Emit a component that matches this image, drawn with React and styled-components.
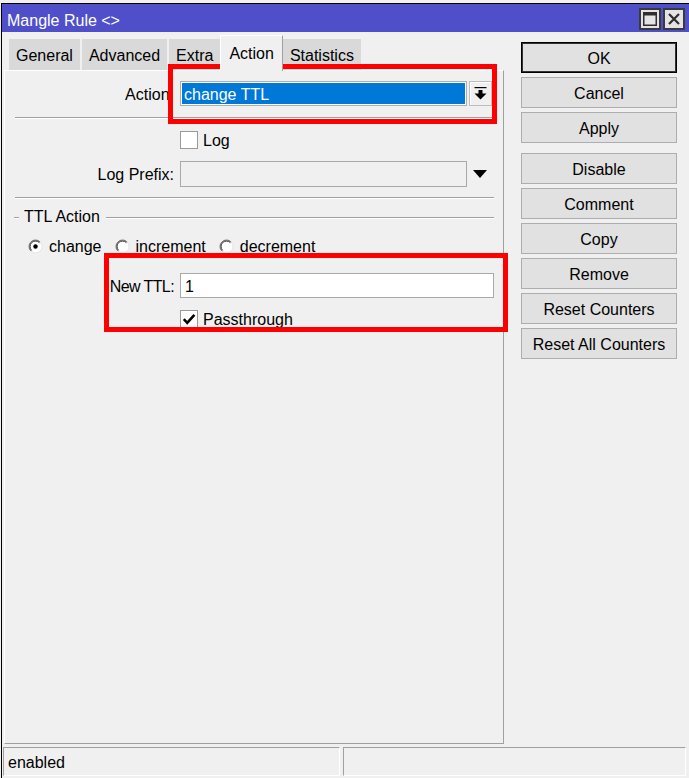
import React from 'react';
import styled, { createGlobalStyle } from 'styled-components';

const GlobalStyle = createGlobalStyle`
  html, body {
    margin: 0;
    padding: 0;
    background: #f0f0f0;
  }
  body {
    font-family: "Liberation Sans", Arial, sans-serif;
    font-size: 16px;
    color: #000;
  }
  * { box-sizing: border-box; }
`;

const Screen = styled.div`
  position: relative;
  width: 689px;
  height: 778px;
  overflow: hidden;
  background: #f0f0f0;
  padding: 3px 0 0 1px;
`;

const Window = styled.div`
  display: flex;
  flex-direction: column;
  height: 775px;
  border-top: 1px solid #000;
  border-left: 1px solid #000;
  background: #f0f0f0;
`;

const TitleBar = styled.div`
  display: flex;
  align-items: center;
  height: 28px;
  padding: 0 4px 0 5px;
  background: #4f50c9;
  color: #fff;
`;

const TitleText = styled.div`
  flex: 1;
  padding-top: 5px;
  white-space: nowrap;
`;

const TitleButton = styled.div`
  width: 22px;
  height: 22px;
  margin-left: 2px;
  margin-top: 2px;
  border: 2px solid #3a3a3a;
  background: #e4e4e4;
  display: flex;
  align-items: center;
  justify-content: center;
`;

const Body = styled.div`
  flex: 1;
  display: flex;
  min-height: 0;
  padding: 3px 0 0 2px;
`;

const LeftCol = styled.div`
  width: 500px;
  display: flex;
  flex-direction: column;
`;

const Tabs = styled.div`
  display: flex;
  align-items: flex-end;
  height: 35px;
  padding-left: 5px;
`;

const Tab = styled.div`
  position: relative;
  height: ${p => (p.$active ? 36 : 31)}px;
  margin-bottom: ${p => (p.$active ? -1 : 0)}px;
  margin-right: ${p => (p.$active ? 0 : 2)}px;
  margin-left: ${p => (p.$active ? -2 : 0)}px;
  z-index: ${p => (p.$active ? 1 : 0)};
  padding: ${p => (p.$active ? '0 8px' : '3px 7px 0')};
  display: flex;
  align-items: center;
  background: ${p => (p.$active ? '#f0f0f0' : '#d9d9d9')};
  border-top: ${p => (p.$active ? '1px solid #fff' : 'none')};
  border-left: ${p => (p.$active ? '1px solid #fff' : 'none')};
  border-right: ${p => (p.$active ? '1px solid #a0a0a0' : 'none')};
  white-space: nowrap;
`;

const Panel = styled.div`
  flex: 1;
  display: flex;
  flex-direction: column;
  border-top: 1px solid #fff;
  border-left: 1px solid #fff;
  border-right: 1px solid #a0a0a0;
  border-bottom: 1px solid #a0a0a0;
  padding: 0 9px 0 0;
`;

const Row = styled.div`
  display: flex;
  align-items: center;
  height: ${p => p.$h}px;
  margin-top: ${p => p.$mt}px;
  padding-left: ${p => p.$indent || 0}px;
`;

const Text = styled.span`
  padding-top: 2px;
  white-space: nowrap;
`;

const Label = styled.div`
  width: 169px;
  margin-right: 6px;
  padding-top: 2px;
  text-align: right;
  white-space: nowrap;
  letter-spacing: ${p => (p.$tight ? '-0.6px' : 'normal')};
`;

const Combo = styled.div`
  width: 287px;
  height: 25px;
  border: 1px solid #adadad;
  background: #fff;
  padding: 1px;
`;

const ComboValue = styled.div`
  height: 100%;
  background: #0078d7;
  color: #fff;
  padding: 2px 0 0 2px;
  display: flex;
  align-items: center;
`;

const DropButton = styled.div`
  width: 23px;
  height: 25px;
  margin-left: 2px;
  border: 1px solid #bcbcbc;
  box-shadow: inset 1px 1px 0 #fff;
  display: flex;
  align-items: center;
  justify-content: center;
`;

const TextInput = styled.div`
  width: ${p => (p.$w ? `${p.$w}px` : 'auto')};
  flex: ${p => (p.$w ? '0 0 auto' : 1)};
  height: ${p => p.$h}px;
  border: 1px solid #a9a9a9;
  background: ${p => (p.$white ? '#fff' : 'transparent')};
  padding: 2px 0 0 4px;
  display: flex;
  align-items: center;
`;

const Separator = styled.div`
  margin: ${p => p.$mt}px 0 0 10px;
  border-top: 1px solid #a0a0a0;
  border-bottom: 1px solid #fff;
`;

const GroupHeader = styled.div`
  display: flex;
  align-items: center;
  height: 18px;
  margin-top: 8px;
  padding-left: 9px;
`;

const GroupLine = styled.div`
  width: ${p => (p.$w ? `${p.$w}px` : 'auto')};
  flex: ${p => (p.$w ? '0 0 auto' : 1)};
  margin-top: 4px;
  border-top: 1px solid #a0a0a0;
  border-bottom: 1px solid #fff;
`;

const GroupTitle = styled.div`
  margin: 0 6px 0 5px;
  padding-top: 2px;
  white-space: nowrap;
`;

const RadioItem = styled.div`
  display: flex;
  align-items: center;
  gap: 6px;
  margin-right: 13px;
`;

const CheckBox = styled.div`
  width: 18px;
  height: 18px;
  border: 1px solid #9a9a9a;
  background: #fff;
  margin-right: 5px;
  display: flex;
  align-items: center;
  justify-content: center;
`;

const RightCol = styled.div`
  width: 156px;
  margin-left: 17px;
  padding-top: 7px;
  display: flex;
  flex-direction: column;
  gap: 4px;
`;

const Button = styled.div`
  height: 31px;
  margin-top: ${p => (p.$spaced ? 6 : 0)}px;
  padding-top: 2px;
  border: 1px solid ${p => (p.$default ? '#000' : '#adadad')};
  box-shadow: ${p => (p.$default ? 'inset 0 0 0 1px #333' : 'none')};
  background: #e1e1e1;
  display: flex;
  align-items: center;
  justify-content: center;
  white-space: nowrap;
`;

const StatusBar = styled.div`
  display: flex;
  gap: 3px;
  height: 31px;
  margin-top: 3px;
  padding: 0 3px 2px 1px;
`;

const StatusCell = styled.div`
  width: ${p => (p.$w ? `${p.$w}px` : 'auto')};
  flex: ${p => (p.$w ? '0 0 auto' : 1)};
  border-top: 1px solid #a0a0a0;
  border-left: 1px solid #a0a0a0;
  border-right: 1px solid #fff;
  border-bottom: 1px solid #fff;
  padding: 2px 0 0 4px;
  display: flex;
  align-items: center;
`;

const Highlight = styled.div`
  position: absolute;
  left: ${p => p.$x}px;
  top: ${p => p.$y}px;
  width: ${p => p.$w}px;
  height: ${p => p.$h}px;
  border: 5px solid #ff0000;
  pointer-events: none;
`;

const Radio = ({ checked }) => (
  <svg width="15" height="15" viewBox="0 0 15 15">
    <circle cx="7.5" cy="7.5" r="6.5" fill="#fff" stroke="#e6e6e6" strokeWidth="1" />
    <path d="M2.9 12.1 A6.5 6.5 0 0 1 12.1 2.9" fill="none" stroke="#7a7a7a" strokeWidth="1" />
    <path d="M3.6 11.4 A5.5 5.5 0 0 1 11.4 3.6" fill="none" stroke="#1e1e1e" strokeWidth="1" />
    {checked && <circle cx="7.5" cy="7.5" r="2.2" fill="#000" />}
  </svg>
);

const CheckMark = () => (
  <svg width="14" height="14" viewBox="0 0 14 14">
    <path d="M1.8 7.2 L5.2 10.8 L12.4 2.8" fill="none" stroke="#000" strokeWidth="2.6" />
  </svg>
);

const DropArrow = () => (
  <svg width="13" height="13" viewBox="0 0 13 13">
    <rect x="0.5" y="0" width="12" height="1.2" fill="#000" />
    <rect x="4.5" y="3" width="4" height="4" fill="#000" />
    <polygon points="0.5,6.5 12.5,6.5 6.5,12.5" fill="#000" />
  </svg>
);

const Triangle = () => (
  <svg width="14" height="8" viewBox="0 0 14 8" style={{ marginLeft: 6 }}>
    <polygon points="0,0 14,0 7,8" fill="#000" />
  </svg>
);

const MaxIcon = () => (
  <svg width="14" height="14" viewBox="0 0 14 14">
    <rect x="0.75" y="0.75" width="12.5" height="12.5" fill="none" stroke="#2e2e2e" strokeWidth="1.5" />
    <rect x="0" y="0" width="14" height="3.5" fill="#2e2e2e" />
  </svg>
);

const CloseIcon = () => (
  <svg width="12" height="12" viewBox="0 0 12 12">
    <path d="M1 1 L11 11 M11 1 L1 11" stroke="#2e2e2e" strokeWidth="2.2" />
  </svg>
);

const tabs = ['General', 'Advanced', 'Extra', 'Action', 'Statistics'];

const buttons = [
  { label: 'OK', def: true },
  { label: 'Cancel' },
  { label: 'Apply' },
  { label: 'Disable', spaced: true },
  { label: 'Comment' },
  { label: 'Copy' },
  { label: 'Remove' },
  { label: 'Reset Counters' },
  { label: 'Reset All Counters' },
];

const radios = [
  { label: 'change', checked: true },
  { label: 'increment' },
  { label: 'decrement' },
];

export default function App() {
  return (
    <Screen>
      <GlobalStyle />
      <Window>
        <TitleBar>
          <TitleText>Mangle Rule &lt;&gt;</TitleText>
          <TitleButton><MaxIcon /></TitleButton>
          <TitleButton><CloseIcon /></TitleButton>
        </TitleBar>

        <Body>
          <LeftCol>
            <Tabs>
              {tabs.map(t => (
                <Tab key={t} $active={t === 'Action'}>{t}</Tab>
              ))}
            </Tabs>
            <Panel>
              <Row $h={25} $mt={10}>
                <Label>Action:</Label>
                <Combo>
                  <ComboValue>change TTL</ComboValue>
                </Combo>
                <DropButton><DropArrow /></DropButton>
              </Row>

              <Separator $mt={11} />

              <Row $h={18} $mt={12} $indent={175}>
                <CheckBox />
                <Text>Log</Text>
              </Row>

              <Row $h={26} $mt={12}>
                <Label>Log Prefix:</Label>
                <TextInput $w={287} $h={26} />
                <Triangle />
              </Row>

              <Separator $mt={10} />

              <GroupHeader>
                <GroupLine $w={5} />
                <GroupTitle>TTL Action</GroupTitle>
                <GroupLine />
              </GroupHeader>

              <Row $h={18} $mt={12} $indent={23}>
                {radios.map(r => (
                  <RadioItem key={r.label}>
                    <Radio checked={r.checked} />
                    <Text>{r.label}</Text>
                  </RadioItem>
                ))}
              </Row>

              <Row $h={25} $mt={18}>
                <Label $tight>New TTL:</Label>
                <TextInput $h={25} $white>1</TextInput>
              </Row>

              <Row $h={18} $mt={12} $indent={175}>
                <CheckBox><CheckMark /></CheckBox>
                <Text>Passthrough</Text>
              </Row>
            </Panel>
          </LeftCol>

          <RightCol>
            {buttons.map(b => (
              <Button key={b.label} $default={b.def} $spaced={b.spaced}>
                {b.label}
              </Button>
            ))}
          </RightCol>
        </Body>

        <StatusBar>
          <StatusCell $w={337}>enabled</StatusCell>
          <StatusCell />
        </StatusBar>
      </Window>

      <Highlight $x={168} $y={64} $w={329} $h={60} />
      <Highlight $x={104} $y={253} $w={404} $h={79} />
    </Screen>
  );
}
